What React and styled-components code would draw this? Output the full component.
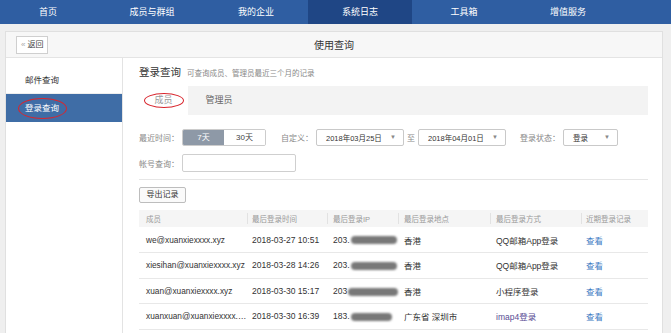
import React from "react";
import styled, { createGlobalStyle } from "styled-components";

const GlobalStyle = createGlobalStyle`
  html, body { margin: 0; padding: 0; background: #efefef; }
  body {
    font-family: "Liberation Sans", "Noto Sans CJK SC", sans-serif;
    width: 671px;
    height: 333px;
    overflow: hidden;
    color: #333;
  }
  * { box-sizing: border-box; }
`;

const TopNav = styled.div`
  height: 24px;
  background: #2f5ea2;
  display: flex;
  margin-left: -4px;
`;

const NavItem = styled.div`
  width: 104px;
  height: 24px;
  line-height: 24px;
  text-align: center;
  font-size: 9px;
  color: #fff;
  background: ${(p) => (p.active ? "#1f4685" : "transparent")};
`;

const Page = styled.div`
  padding: 7px 8px 0 5px;
`;

const Panel = styled.div`
  width: 658px;
  background: #fff;
  border: 1px solid #e0e0e0;
`;

const PanelHead = styled.div`
  height: 26px;
  background: #f7f7f7;
  border-bottom: 1px solid #e4e4e4;
  display: grid;
  grid-template-columns: 1fr auto 1fr;
  align-items: center;
`;

const BackButton = styled.div`
  justify-self: start;
  margin-left: 10px;
  height: 18px;
  line-height: 16px;
  padding: 0 4px;
  border: 1px solid #cfcfcf;
  background: #fff;
  font-size: 8px;
  color: #444;
  span { color: #aaa; margin-right: 2px; }
`;

const PanelTitle = styled.div`
  font-size: 10px;
  color: #333;
`;

const Body = styled.div`
  display: flex;
  height: 280px;
`;

const Sidebar = styled.div`
  width: 117px;
  border-right: 1px solid #e3e3e3;
  padding-top: 8px;
`;

const SideItem = styled.div`
  position: relative;
  height: 28px;
  line-height: 28px;
  padding-left: 19px;
  font-size: 8.5px;
  color: ${(p) => (p.active ? "#fff" : "#333")};
  background: ${(p) => (p.active ? "#3f6da6" : "transparent")};
  border-bottom: 1px solid ${(p) => (p.active ? "#3f6da6" : "#eeeeee")};
`;

const RedRing = styled.span`
  position: absolute;
  left: ${(p) => p.x}px;
  top: ${(p) => p.y}px;
  width: ${(p) => p.w}px;
  height: ${(p) => p.h}px;
  border: 1.5px solid #d8262e;
  border-radius: 50%;
  pointer-events: none;
`;

const Main = styled.div`
  flex: 1;
  padding: 6px 14px 0 16px;
`;

const TitleRow = styled.div`
  height: 16px;
  display: flex;
  align-items: baseline;
  gap: 6px;
`;

const Title = styled.span`
  font-size: 10.5px;
  color: #333;
`;

const Subtitle = styled.span`
  font-size: 7.5px;
  color: #888;
`;

const Tabs = styled.div`
  margin-top: 6px;
  height: 29px;
  background: #f3f3f3;
  display: flex;
`;

const Tab = styled.div`
  position: relative;
  width: ${(p) => p.w}px;
  line-height: 29px;
  text-align: center;
  font-size: 9px;
  color: ${(p) => (p.active ? "#999" : "#666")};
  background: ${(p) => (p.active ? "#fff" : "transparent")};
`;

const FilterRow = styled.div`
  display: flex;
  align-items: center;
  height: 18px;
  margin-top: ${(p) => p.mt}px;
`;

const Label = styled.span`
  font-size: 8px;
  color: #888;
  margin-left: ${(p) => p.ml || 0}px;
  margin-right: 3px;
  white-space: nowrap;
`;

const Segment = styled.div`
  display: flex;
  height: 17px;
  border: 1px solid #ccc;
  border-radius: 2px;
  overflow: hidden;
`;

const SegButton = styled.div`
  width: 41px;
  line-height: 15px;
  text-align: center;
  font-size: 8px;
  color: ${(p) => (p.active ? "#fff" : "#444")};
  background: ${(p) => (p.active ? "#8e99a7" : "#fff")};
`;

const Select = styled.div`
  width: ${(p) => p.w}px;
  height: 17px;
  border: 1px solid #c9c9c9;
  border-radius: 2px;
  display: flex;
  align-items: center;
  justify-content: space-between;
  padding: 0 7px 0 9px;
  font-size: 7.5px;
  color: #333;
  margin-right: 3px;
`;

const Caret = styled.span`
  font-size: 6px;
  color: #888;
`;

const TextInput = styled.div`
  width: 114px;
  height: 18px;
  border: 1px solid #cfcfcf;
  border-radius: 2px;
`;

const Divider = styled.div`
  margin-top: 7px;
  border-top: 1px solid #e6e6e6;
`;

const ExportButton = styled.div`
  margin-top: 7px;
  width: 47px;
  height: 16px;
  line-height: 14px;
  text-align: center;
  font-size: 8px;
  color: #333;
  border: 1px solid #bdbdbd;
  border-radius: 2px;
  background: #fafafa;
`;

const Table = styled.table`
  margin-top: 7px;
  width: 509px;
  border-collapse: collapse;
  table-layout: fixed;
`;

const Th = styled.th`
  position: relative;
  height: 17px;
  background: #f5f5f5;
  font-weight: normal;
  font-size: 7.5px;
  color: #999;
  text-align: left;
  padding: 0 0 0 ${(p) => p.pl || 6}px;
  &::before {
    content: "";
    display: ${(p) => (p.first ? "none" : "block")};
    position: absolute;
    left: 0;
    top: 3px;
    bottom: 3px;
    border-left: 1px solid #e2e2e2;
  }
`;

const Td = styled.td`
  height: 25.5px;
  border-bottom: 1px solid #e8e8e8;
  font-size: ${(p) => p.fs || 8.5}px;
  color: ${(p) => p.color || "#333"};
  padding: 0 0 0 ${(p) => p.pl || 6}px;
  white-space: nowrap;
  overflow: ${(p) => (p.spill ? "visible" : "hidden")};
  text-overflow: ${(p) => (p.spill ? "clip" : "ellipsis")};
`;

const Blob = styled.span`
  display: inline-block;
  vertical-align: middle;
  width: ${(p) => p.w}px;
  height: 8px;
  margin-left: 1px;
  background: #787878;
  border-radius: 4px;
  filter: blur(0.8px);
`;

const Link = styled.span`
  color: #3f7cc4;
`;

const navItems = ["首页", "成员与群组", "我的企业", "系统日志", "工具箱", "增值服务"];

const rows = [
  { member: "we@xuanxiexxxx.xyz", time: "2018-03-27 10:51", ip: "203.", blob: 46, place: "香港", way: "QQ邮箱App登录" },
  { member: "xiesihan@xuanxiexxxx.xyz", time: "2018-03-28 14:26", ip: "203.", blob: 46, place: "香港", way: "QQ邮箱App登录" },
  { member: "xuan@xuanxiexxxx.xyz", time: "2018-03-30 15:17", ip: "203", blob: 50, place: "香港", way: "小程序登录" },
  { member: "xuanxuan@xuanxiexxxx.xyz", time: "2018-03-30 16:39", ip: "183.", blob: 41, place: "广东省 深圳市", way: "imap4登录", wayColor: "#584c94" },
];

const App = () => {
  return (
    <>
      <GlobalStyle />
      <TopNav>
        {navItems.map((el) => (
          <NavItem key={el} active={el === "系统日志"}>{el}</NavItem>
        ))}
      </TopNav>
      <Page>
        <Panel>
          <PanelHead>
            <BackButton><span>«</span>返回</BackButton>
            <PanelTitle>使用查询</PanelTitle>
            <div />
          </PanelHead>
          <Body>
            <Sidebar>
              <SideItem>邮件查询</SideItem>
              <SideItem active>
                登录查询
                <RedRing x={12} y={4} w={49} h={21} />
              </SideItem>
            </Sidebar>
            <Main>
              <TitleRow>
                <Title>登录查询</Title>
                <Subtitle>可查询成员、管理员最近三个月的记录</Subtitle>
              </TitleRow>
              <Tabs>
                <Tab w={49} active>
                  成员
                  <RedRing x={5} y={7} w={40} h={15} />
                </Tab>
                <Tab w={62}>管理员</Tab>
              </Tabs>
              <FilterRow mt={13}>
                <Label>最近时间：</Label>
                <Segment>
                  <SegButton active>7天</SegButton>
                  <SegButton>30天</SegButton>
                </Segment>
                <Label ml={15}>自定义：</Label>
                <Select w={88}>2018年03月25日<Caret>▼</Caret></Select>
                <Label>至</Label>
                <Select w={88}>2018年04月01日<Caret>▼</Caret></Select>
                <Label ml={11}>登录状态：</Label>
                <Select w={55}>登录<Caret>▼</Caret></Select>
              </FilterRow>
              <FilterRow mt={8}>
                <Label>帐号查询：</Label>
                <TextInput />
              </FilterRow>
              <Divider />
              <ExportButton>导出记录</ExportButton>
              <Table>
                <colgroup>
                  <col style={{ width: 108 }} />
                  <col style={{ width: 80 }} />
                  <col style={{ width: 71 }} />
                  <col style={{ width: 92 }} />
                  <col style={{ width: 91 }} />
                  <col style={{ width: 67 }} />
                </colgroup>
                <thead>
                  <tr>
                    <Th first pl={7}>成员</Th>
                    <Th pl={5}>最后登录时间</Th>
                    <Th>最后登录IP</Th>
                    <Th>最后登录地点</Th>
                    <Th>最后登录方式</Th>
                    <Th pl={5}>近期登录记录</Th>
                  </tr>
                </thead>
                <tbody>
                  {rows.map((el) => (
                    <tr key={el.member}>
                      <Td pl={7} fs={8.3}>{el.member}</Td>
                      <Td pl={5}>{el.time}</Td>
                      <Td spill>{el.ip}<Blob w={el.blob} /></Td>
                      <Td>{el.place}</Td>
                      <Td color={el.wayColor}>{el.way}</Td>
                      <Td pl={5}><Link>查看</Link></Td>
                    </tr>
                  ))}
                </tbody>
              </Table>
            </Main>
          </Body>
        </Panel>
      </Page>
    </>
  );
};

export default App;
